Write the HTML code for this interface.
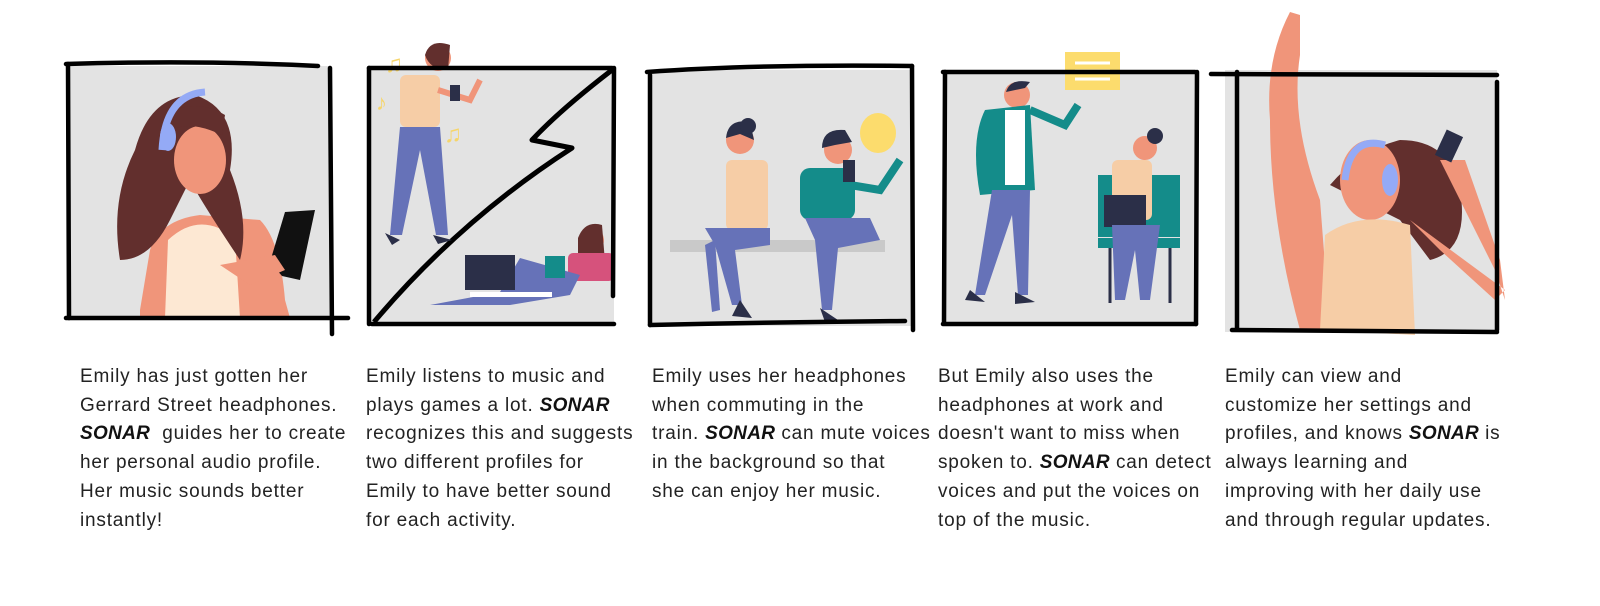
<!DOCTYPE html>
<html><head><meta charset="utf-8">
<style>
html,body{margin:0;padding:0;background:#fff;width:1600px;height:606px;overflow:hidden;position:relative}
svg{position:absolute;left:0;top:0}
.t{position:absolute;top:363px;font-family:"Liberation Sans",sans-serif;font-size:19px;letter-spacing:0.8px;line-height:28.7px;color:#222;white-space:nowrap}
.t b{font-style:italic;font-weight:bold;color:#111;letter-spacing:0.3px}
</style></head><body>
<svg width="1600" height="606" viewBox="0 0 1600 606">
<g fill="#e3e3e3">
<rect x="68" y="66" width="262" height="252"/>
<rect x="370" y="68" width="244" height="256"/>
<rect x="652" y="70" width="260" height="256"/>
<rect x="945" y="72" width="252" height="252"/>
<rect x="1225" y="70" width="272" height="262"/>
</g>
<!-- panel 1 -->
<path d="M140 310 L150 250 Q160 220 200 215 L260 220 Q280 240 285 300 L290 318 L140 318Z" fill="#f0957a"/>
<path d="M165 318 L168 240 Q200 210 235 238 L240 318Z" fill="#fde8d3"/>
<path d="M120 260 Q110 200 135 150 Q150 95 195 95 Q240 110 230 170 Q250 220 240 260 Q200 200 190 180 L170 220 Q150 260 120 260Z" fill="#622f2d"/>
<ellipse cx="200" cy="160" rx="26" ry="34" fill="#f0957a"/>
<path d="M172 130 Q190 120 222 135 L225 115 Q200 100 175 110Z" fill="#622f2d"/>
<path d="M162 150 Q165 95 205 92" stroke="#94aaf6" stroke-width="7" fill="none"/>
<ellipse cx="168" cy="137" rx="8" ry="14" fill="#94aaf6"/>
<path d="M270 262 L285 212 L315 210 L300 280 L282 276Z" fill="#111"/>
<path d="M220 265 L275 255 L285 270 L250 285Z" fill="#f0957a"/>
<!-- panel 2 -->
<path d="M374 322 Q460 220 572 148 L532 140 Q560 110 612 70" stroke="#000" stroke-width="5" fill="none" stroke-linejoin="round"/>
<circle cx="438" cy="58" r="13" fill="#f0957a"/><path d="M425 55 Q430 38 450 45 L448 70 Q430 70 425 55Z" fill="#622f2d"/>
<rect x="400" y="75" width="40" height="52" rx="6" fill="#f6cda6"/>
<path d="M400 127 L440 127 L448 235 L436 235 L420 150 L402 235 L390 235Z" fill="#6672b8"/>
<path d="M438 90 L470 100 L480 80" stroke="#f0957a" stroke-width="6" fill="none"/>
<rect x="450" y="85" width="10" height="16" fill="#2b2f48"/>
<path d="M385 233 L400 240 L392 245Z M433 235 L452 240 L438 244Z" fill="#2b2f48"/>
<text x="385" y="72" fill="#f6d56a" font-size="24">♫</text><text x="376" y="110" fill="#f6d56a" font-size="22">♪</text><text x="444" y="142" fill="#f6d56a" font-size="24">♫</text>
<circle cx="592" cy="240" r="12" fill="#f0957a"/><path d="M578 238 Q585 220 602 225 L605 262 L578 262Z" fill="#622f2d"/>
<rect x="568" y="253" width="46" height="28" rx="5" fill="#d6527c"/>
<path d="M430 305 L500 292 L520 258 L580 275 L570 295 L510 305Z" fill="#6672b8"/>
<rect x="465" y="255" width="50" height="35" fill="#2b2f48"/>
<rect x="470" y="292" width="82" height="5" fill="#fff"/>
<rect x="545" y="256" width="20" height="22" fill="#148c8a"/>
<!-- panel 3 -->
<rect x="670" y="240" width="215" height="12" fill="#c9c9c9"/>
<circle cx="740" cy="140" r="14" fill="#f0957a"/><path d="M726 138 Q728 118 750 122 L754 140 L740 134Z" fill="#2b2f48"/><circle cx="748" cy="126" r="8" fill="#2b2f48"/>
<rect x="726" y="160" width="42" height="70" rx="6" fill="#f6cda6"/>
<path d="M705 228 L770 228 L770 245 L735 250 L742 305 L732 305 L715 245Z" fill="#6672b8"/>
<path d="M715 240 L720 310 L712 312 L705 245Z" fill="#6672b8"/>
<circle cx="838" cy="150" r="14" fill="#f0957a"/><path d="M822 148 Q822 128 845 130 L852 142 L835 145Z" fill="#2b2f48"/>
<rect x="800" y="168" width="55" height="52" rx="10" fill="#148c8a"/>
<path d="M850 185 L880 190 L900 160" stroke="#148c8a" stroke-width="8" fill="none"/>
<path d="M805 218 L870 218 L880 240 L838 248 L832 310 L822 310 L815 240Z" fill="#6672b8"/>
<path d="M820 308 L838 320 L825 322Z M740 300 L752 318 L732 316Z" fill="#2b2f48"/>
<rect x="843" y="160" width="12" height="22" fill="#2b2f48"/>
<ellipse cx="878" cy="133" rx="18" ry="20" fill="#fcdc6d"/>
<!-- panel 4 -->
<rect x="1065" y="52" width="55" height="38" fill="#fcdc6d"/>
<path d="M1075 63h35M1075 71h35M1075 79h35" stroke="#fff" stroke-width="3"/>
<circle cx="1017" cy="95" r="13" fill="#f0957a"/><path d="M1006 92 Q1010 78 1030 82 L1025 88Z" fill="#2b2f48"/>
<path d="M985 110 L1030 105 L1035 190 L980 195 Q970 140 985 110Z" fill="#148c8a"/>
<rect x="1005" y="110" width="20" height="75" fill="#fff"/>
<path d="M1030 110 L1065 125 L1078 105" stroke="#148c8a" stroke-width="8" fill="none"/>
<path d="M992 190 L1030 190 L1028 295 L1018 295 L1012 215 L985 295 L975 295Z" fill="#6672b8"/>
<path d="M970 290 L985 302 L965 300Z M1015 292 L1035 302 L1015 304Z" fill="#2b2f48"/>
<rect x="1098" y="175" width="82" height="62" fill="#148c8a"/>
<rect x="1112" y="160" width="40" height="60" rx="6" fill="#f6cda6"/>
<circle cx="1145" cy="148" r="12" fill="#f0957a"/><circle cx="1155" cy="136" r="8" fill="#2b2f48"/>
<rect x="1104" y="195" width="42" height="32" fill="#2b2f48"/>
<rect x="1098" y="238" width="82" height="10" fill="#148c8a"/>
<path d="M1110 248v55M1170 248v55" stroke="#2b2f48" stroke-width="3"/>
<path d="M1112 225 L1160 225 L1150 300 L1140 300 L1135 250 L1125 300 L1115 300Z" fill="#6672b8"/>
<!-- panel 5 -->
<path d="M1270 120 Q1265 60 1290 12 L1300 15 L1300 55 Q1290 120 1320 200 L1330 330 L1300 330 Q1270 220 1270 120Z" fill="#f0957a"/>
<path d="M1330 185 Q1360 150 1400 140 Q1450 140 1460 190 Q1470 250 1430 260 L1400 220Z" fill="#622f2d"/>
<ellipse cx="1370" cy="180" rx="30" ry="40" fill="#f0957a"/>
<path d="M1320 330 L1325 235 Q1360 210 1410 225 L1415 335Z" fill="#f6cda6"/>
<path d="M1410 220 L1505 290 L1495 300 L1440 250Z M1440 160 L1470 220 L1495 270 L1505 300 L1500 260 L1465 160Z" fill="#f0957a"/>
<rect x="1440" y="132" width="18" height="28" transform="rotate(25 1449 146)" fill="#2b2f48"/>
<path d="M1345 180 Q1350 135 1385 145" stroke="#94aaf6" stroke-width="7" fill="none"/>
<ellipse cx="1390" cy="180" rx="8" ry="16" fill="#94aaf6"/>
<!-- borders -->
<g stroke="#000" stroke-width="4.5" fill="none" stroke-linecap="round">
<path d="M66 64 Q200 60 318 66"/><path d="M68 64 L69 318"/><path d="M330 68 L332 334"/><path d="M66 318 L348 318"/>
<path d="M369 68 L612 68"/><path d="M369 68 L369 324"/><path d="M614 68 L613 296"/><path d="M372 324 L614 324"/>
<path d="M647 72 Q760 64 912 66"/><path d="M650 75 L650 325"/><path d="M912 66 L913 330"/><path d="M650 325 Q780 322 905 321"/>
<path d="M943 72 L1195 72"/><path d="M945 72 L944 322"/><path d="M1197 72 L1196 324"/><path d="M943 324 L1196 324"/>
<path d="M1211 74 L1497 75"/><path d="M1237 72 L1237 328"/><path d="M1497 82 L1497 330"/><path d="M1232 330 L1497 332"/>
</g>
</svg>
<div class="t" style="left:80px">Emily has just gotten her<br>Gerrard Street headphones.<br><b>SONAR</b>&nbsp; guides her to create<br>her personal audio profile.<br>Her music sounds better<br>instantly!</div>
<div class="t" style="left:366px">Emily listens to music and<br>plays games a lot. <b>SONAR</b><br>recognizes this and suggests<br>two different profiles for<br>Emily to have better sound<br>for each activity.</div>
<div class="t" style="left:652px">Emily uses her headphones<br>when commuting in the<br>train. <b>SONAR</b> can mute voices<br>in the background so that<br>she can enjoy her music.</div>
<div class="t" style="left:938px">But Emily also uses the<br>headphones at work and<br>doesn't want to miss when<br>spoken to. <b>SONAR</b> can detect<br>voices and put the voices on<br>top of the music.</div>
<div class="t" style="left:1225px">Emily can view and<br>customize her settings and<br>profiles, and knows <b>SONAR</b> is<br>always learning and<br>improving with her daily use<br>and through regular updates.</div>
</body></html>
